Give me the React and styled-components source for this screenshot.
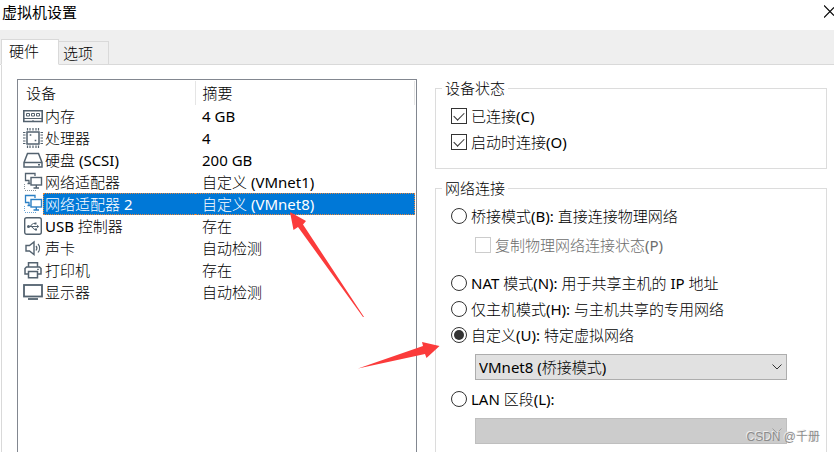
import React from "react";
import styled, { createGlobalStyle } from "styled-components";

const devices = [
  { icon: "memory", name: "内存", summary: "4 GB" },
  { icon: "cpu", name: "处理器", summary: "4" },
  { icon: "disk", name: "硬盘 (SCSI)", summary: "200 GB" },
  { icon: "network", name: "网络适配器", summary: "自定义 (VMnet1)" },
  { icon: "network", name: "网络适配器 2", summary: "自定义 (VMnet8)", selected: true },
  { icon: "usb", name: "USB 控制器", summary: "存在" },
  { icon: "sound", name: "声卡", summary: "自动检测" },
  { icon: "printer", name: "打印机", summary: "存在" },
  { icon: "display", name: "显示器", summary: "自动检测" },
];

const icons = {
  memory: (
    <>
      <path d="M.8 5.800h18.400v10.700H.8z" strokeWidth="1.6" />
      <path d="M3.500 8.500h3v2.500h-3zM8.500 8.500h3v2.500h-3zM13.500 8.500h3v2.500h-3z" />
      <path d="M1 13.500h18" />
      <path d="M8 17l2-2 2 2z" fill="currentColor" stroke="none" />
    </>
  ),
  cpu: (
    <>
      <rect x="4" y="5" width="12" height="12" strokeWidth="1.5" />
      <path
        d="M4.500 1v2.500M7 1v2.500M10 1v2.500M13 1v2.500M15.500 1v2.500M4.500 18.500V21M7 18.500V21M10 18.500V21M13 18.500V21M15.500 18.500V21M0 5.500h2.500M0 8h2.500M0 11h2.500M0 14h2.500M0 16.500h2.500M17.500 5.500H20M17.500 8H20M17.500 11H20M17.500 14H20M17.500 16.500H20"
        strokeWidth="1.2"
      />
      <path d="M6.700 8h1.600M11.700 13.500h1.600" strokeWidth="1.6" />
    </>
  ),
  disk: (
    <>
      <path d="M1 13.500L4.500 4.500h11L19 13.500V18H1zM1 13.500h18" strokeWidth="1.5" />
      <path d="M15 15.800h2" strokeWidth="1.4" />
    </>
  ),
  network: (
    <>
      <path d="M6.500 9.500h-4v-7H12V5M4.500 12.500h3M6 9.500v3" strokeWidth="1.3" />
      <rect x="8" y="6.500" width="10.500" height="7.500" strokeWidth="1.4" />
      <path d="M13.300 14v2.500M10.500 17h5.500" strokeWidth="1.4" />
      <path d="M1.500 13v6M2 19.500h11" strokeDasharray="1 1" opacity="0.7" />
    </>
  ),
  usb: (
    <>
      <rect x="1.700" y="2.700" width="16.600" height="16.600" rx="2" strokeWidth="1.4" />
      <path d="M5 11.500h10M6.500 11.500c2 0 2-3 4-3h1.500M8 11.500c2 0 2 3 4 3h1" />
      <path d="M14 9.800l2.200 1.700L14 13.200zM11.500 7.500h2v2h-2zM12 13.500h2v2h-2z" fill="currentColor" stroke="none" />
      <circle cx="5.500" cy="11.500" r="1.500" fill="currentColor" stroke="none" />
    </>
  ),
  sound: (
    <>
      <path d="M3 8.500h3.500L11 5v12.500L6.500 14H3z" strokeWidth="1.4" />
      <path d="M13 9c1 1.200 1 3.200 0 4.500M15 7c2 2.300 2 6 0 8.500" strokeWidth="1.2" />
    </>
  ),
  printer: (
    <>
      <path d="M5.500 8V3.800h9V8M5.500 15H2V9.500L3.500 8h13L18 9.500V15h-3.500" strokeWidth="1.5" />
      <path d="M5.500 12.500h9v6.300h-9z" strokeWidth="1.5" />
      <path d="M14 10.300h2" />
    </>
  ),
  display: (
    <>
      <rect x="1" y="4" width="18" height="11.500" strokeWidth="1.8" />
      <path d="M5 18h10" strokeWidth="1.8" />
    </>
  ),
};

export default function App() {
  return (
    <>
      <GlobalStyle />
      <Dialog>
        <TitleBar>
          <Title>虚拟机设置</Title>
          <CloseButton aria-label="关闭">
            <svg width="10" height="13" viewBox="0 0 10 13" fill="none" stroke="#000" strokeWidth="1.2">
              <path d="M0 .5l10 10M0 12.500L10 2.500" />
            </svg>
          </CloseButton>
        </TitleBar>
        <TabList role="tablist">
          <Tab role="tab" aria-selected="true" $active>
            硬件
          </Tab>
          <Tab role="tab" aria-selected="false">
            选项
          </Tab>
        </TabList>
        <TabPage role="tabpanel">
          <DeviceList>
            <DeviceTable>
              <thead>
                <tr>
                  <HeadCell $first>设备</HeadCell>
                  <HeadCell>摘要</HeadCell>
                </tr>
              </thead>
              <tbody>
                {devices.map((device) => (
                  <DeviceRow key={device.name} aria-selected={!!device.selected}>
                    <NameCell>
                      <NameWrap>
                        <DeviceIcon viewBox="0 0 20 22" $selected={device.selected}>
                          {icons[device.icon]}
                        </DeviceIcon>
                        <DeviceName $selected={device.selected}>{device.name}</DeviceName>
                      </NameWrap>
                    </NameCell>
                    <SummaryCell>
                      <Summary $selected={device.selected}>{device.summary}</Summary>
                    </SummaryCell>
                  </DeviceRow>
                ))}
              </tbody>
            </DeviceTable>
          </DeviceList>
          <Settings>
            <Group>
              <Legend>设备状态</Legend>
              <Option>
                <CheckBox type="checkbox" defaultChecked />
                已连接(C)
              </Option>
              <Option>
                <CheckBox type="checkbox" defaultChecked />
                启动时连接(O)
              </Option>
            </Group>
            <Group>
              <Legend>网络连接</Legend>
              <Option>
                <Radio type="radio" name="connection" />
                桥接模式(B): 直接连接物理网络
              </Option>
              <SubOption>
                <CheckBox type="checkbox" disabled />
                复制物理网络连接状态(P)
              </SubOption>
              <Option>
                <Radio type="radio" name="connection" />
                NAT 模式(N): 用于共享主机的 IP 地址
              </Option>
              <Option>
                <Radio type="radio" name="connection" />
                仅主机模式(H): 与主机共享的专用网络
              </Option>
              <Option>
                <Radio type="radio" name="connection" defaultChecked />
                自定义(U): 特定虚拟网络
              </Option>
              <SelectWrap>
                <Select aria-label="特定虚拟网络">
                  <option>VMnet8 (桥接模式)</option>
                </Select>
                <Chevron />
              </SelectWrap>
              <Option>
                <Radio type="radio" name="connection" />
                LAN 区段(L):
              </Option>
              <SelectWrap $disabled>
                <Select aria-label="LAN 区段" disabled />
                <Chevron />
              </SelectWrap>
            </Group>
          </Settings>
        </TabPage>
        <Arrows viewBox="0 0 450 380">
          <path d="M290 212l16 9-3 3.500 61 92.500-1 0L298 227l-4.500 3z" />
          <path d="M439.500 346L422 342l1 4-65 22.500 67-14.500 1.500 4z" />
        </Arrows>
        <Watermark>CSDN @千册</Watermark>
      </Dialog>
    </>
  );
}

function Chevron() {
  return (
    <ChevronIcon viewBox="0 0 10 6">
      <path d="M.5 .5L5 5 9.500 .5" />
    </ChevronIcon>
  );
}

const GlobalStyle = createGlobalStyle`
  * {
    box-sizing: border-box;
  }

  body {
    margin: 0;
    background: #fff;
    color: #000;
  }

  body, button, select {
    font-family: "Noto Sans", "Noto Sans CJK SC Light", "Noto Sans CJK SC", sans-serif;
    font-size: 15px;
    line-height: 22px;
  }
`;

const Dialog = styled.div`
  position: relative;
  height: 100vh;
  overflow: hidden;
`;

const TitleBar = styled.header`
  display: flex;
  justify-content: space-between;
  align-items: flex-start;
  height: 30px;
  padding-left: 2px;
`;

const Title = styled.h1`
  margin: 0;
  font-family: "Noto Sans CJK SC", sans-serif;
  font-size: 15px;
  font-weight: normal;
  line-height: 24px;
`;

const CloseButton = styled.button`
  display: flex;
  padding: 5px 0 0 10px;
  border: 0;
  background: none;
`;

const TabList = styled.div`
  display: flex;
  align-items: flex-end;
  height: 35px;
  padding-left: 1px;
  background: #efefef;
  box-shadow: inset 0 -1px #d9d9d9;
`;

const Tab = styled.button`
  display: flex;
  align-items: center;
  height: ${(props) => (props.$active ? "26px" : "24px")};
  padding: ${(props) => (props.$active ? "0 19px 2px 7px" : "0 15px 0 4px")};
  border: 1px solid #d9d9d9;
  border-left-width: ${(props) => (props.$active ? "1px" : "0")};
  border-bottom-color: ${(props) => (props.$active ? "#fff" : "#d9d9d9")};
  background: ${(props) => (props.$active ? "#fff" : "#efefef")};
`;

const TabPage = styled.main`
  display: grid;
  grid-template-columns: 50fr 49fr;
  gap: 18px;
  margin-left: 1px;
  padding: 14px 7px 20px 15px;
  border-left: 1px solid #d9d9d9;
`;

const DeviceList = styled.div`
  border: 1px solid #828790;
  padding: 1px 1px 0 0;
`;

const DeviceTable = styled.table`
  width: 100%;
  border-collapse: collapse;
  table-layout: fixed;
`;

const HeadCell = styled.th`
  width: ${(props) => (props.$first ? "177px" : "auto")};
  height: 24px;
  padding: 0 0 0 ${(props) => (props.$first ? "8px" : "7px")};
  border-right: 1px solid #e5e5e5;
  font-weight: normal;
  text-align: left;
`;

const DeviceRow = styled.tr`
  height: 22px;
`;

const NameCell = styled.td`
  padding: 0;
`;

const NameWrap = styled.div`
  display: flex;
  padding-left: 5px;
`;

const DeviceIcon = styled.svg`
  width: 20px;
  height: 22px;
  flex: none;
  fill: none;
  stroke: currentColor;
  color: ${(props) => (props.$selected ? "#2b7fc4" : "#53626f")};
`;

const selectedColors = (props) =>
  props.$selected &&
  `
    border-color: #e8863a;
    background: #0078d7;
    color: #fff;
  `;

const DeviceName = styled.div`
  flex: 1;
  height: 22px;
  padding-left: 1px;
  border: 1px dotted transparent;
  border-right: 0;
  line-height: 20px;
  white-space: nowrap;
  ${selectedColors}
`;

const SummaryCell = styled.td`
  padding: 0;
`;

const Summary = styled.div`
  height: 22px;
  padding-left: 7px;
  border: 1px dotted transparent;
  border-left: 0;
  line-height: 20px;
  ${selectedColors}
`;

const Settings = styled.div`
  display: flex;
  flex-direction: column;
  gap: 10px;
  min-width: 0;
`;

const Group = styled.fieldset`
  min-width: 0;
  margin: 0;
  padding: 6px 39px 13px 15px;
  border: 1px solid #dcdcdc;
`;

const Legend = styled.legend`
  margin-left: -9px;
  padding: 0 3px;
  line-height: 18px;
`;

const Option = styled.label`
  display: flex;
  align-items: center;
  gap: 4px;
  height: 26px;
  white-space: nowrap;
`;

const SubOption = styled(Option)`
  height: 32px;
  margin-bottom: 9px;
  padding-left: 24px;
  color: #6d6d6d;
`;

const CheckBox = styled.input`
  appearance: none;
  flex: none;
  display: grid;
  place-items: center;
  width: 16px;
  height: 16px;
  margin: 0;
  border: 1px solid #333;
  background: #fff;

  &:checked::before {
    content: "";
    width: 9px;
    height: 5px;
    margin-bottom: 3px;
    border: solid #333;
    border-width: 0 0 1px 1px;
    transform: rotate(-45deg);
  }

  &:disabled {
    border-color: #ccc;
  }
`;

const Radio = styled.input`
  appearance: none;
  flex: none;
  display: grid;
  place-items: center;
  width: 16px;
  height: 16px;
  margin: 0;
  border: 1px solid #333;
  border-radius: 50%;
  background: #fff;

  &:checked::before {
    content: "";
    width: 10px;
    height: 10px;
    border-radius: 50%;
    background: #333;
  }
`;

const SelectWrap = styled.div`
  position: relative;
  margin: 6px 0 6px 24px;
  color: ${(props) => (props.$disabled ? "#a0a0a0" : "#333")};
`;

const Select = styled.select`
  appearance: none;
  display: block;
  width: 100%;
  height: 26px;
  padding: 0 24px 0 3px;
  border: 1px solid #adadad;
  border-radius: 0;
  background: #e1e1e1;
  color: #000;

  &:disabled {
    border-color: #bfbfbf;
    background: #ccc;
    opacity: 1;
  }
`;

const ChevronIcon = styled.svg`
  position: absolute;
  top: 10px;
  right: 5px;
  width: 10px;
  height: 6px;
  fill: none;
  stroke: currentColor;
  pointer-events: none;
`;

const Arrows = styled.svg`
  position: absolute;
  top: 0;
  left: 0;
  width: 450px;
  height: 380px;
  fill: #fb3b3b;
  pointer-events: none;
`;

const Watermark = styled.span`
  position: absolute;
  right: 14px;
  bottom: 6px;
  color: #8c8c8c;
  font-family: "Liberation Sans", "Noto Sans CJK SC", sans-serif;
  font-size: 12px;
  line-height: 18px;
  text-shadow: -1px -1px #eee;
`;
